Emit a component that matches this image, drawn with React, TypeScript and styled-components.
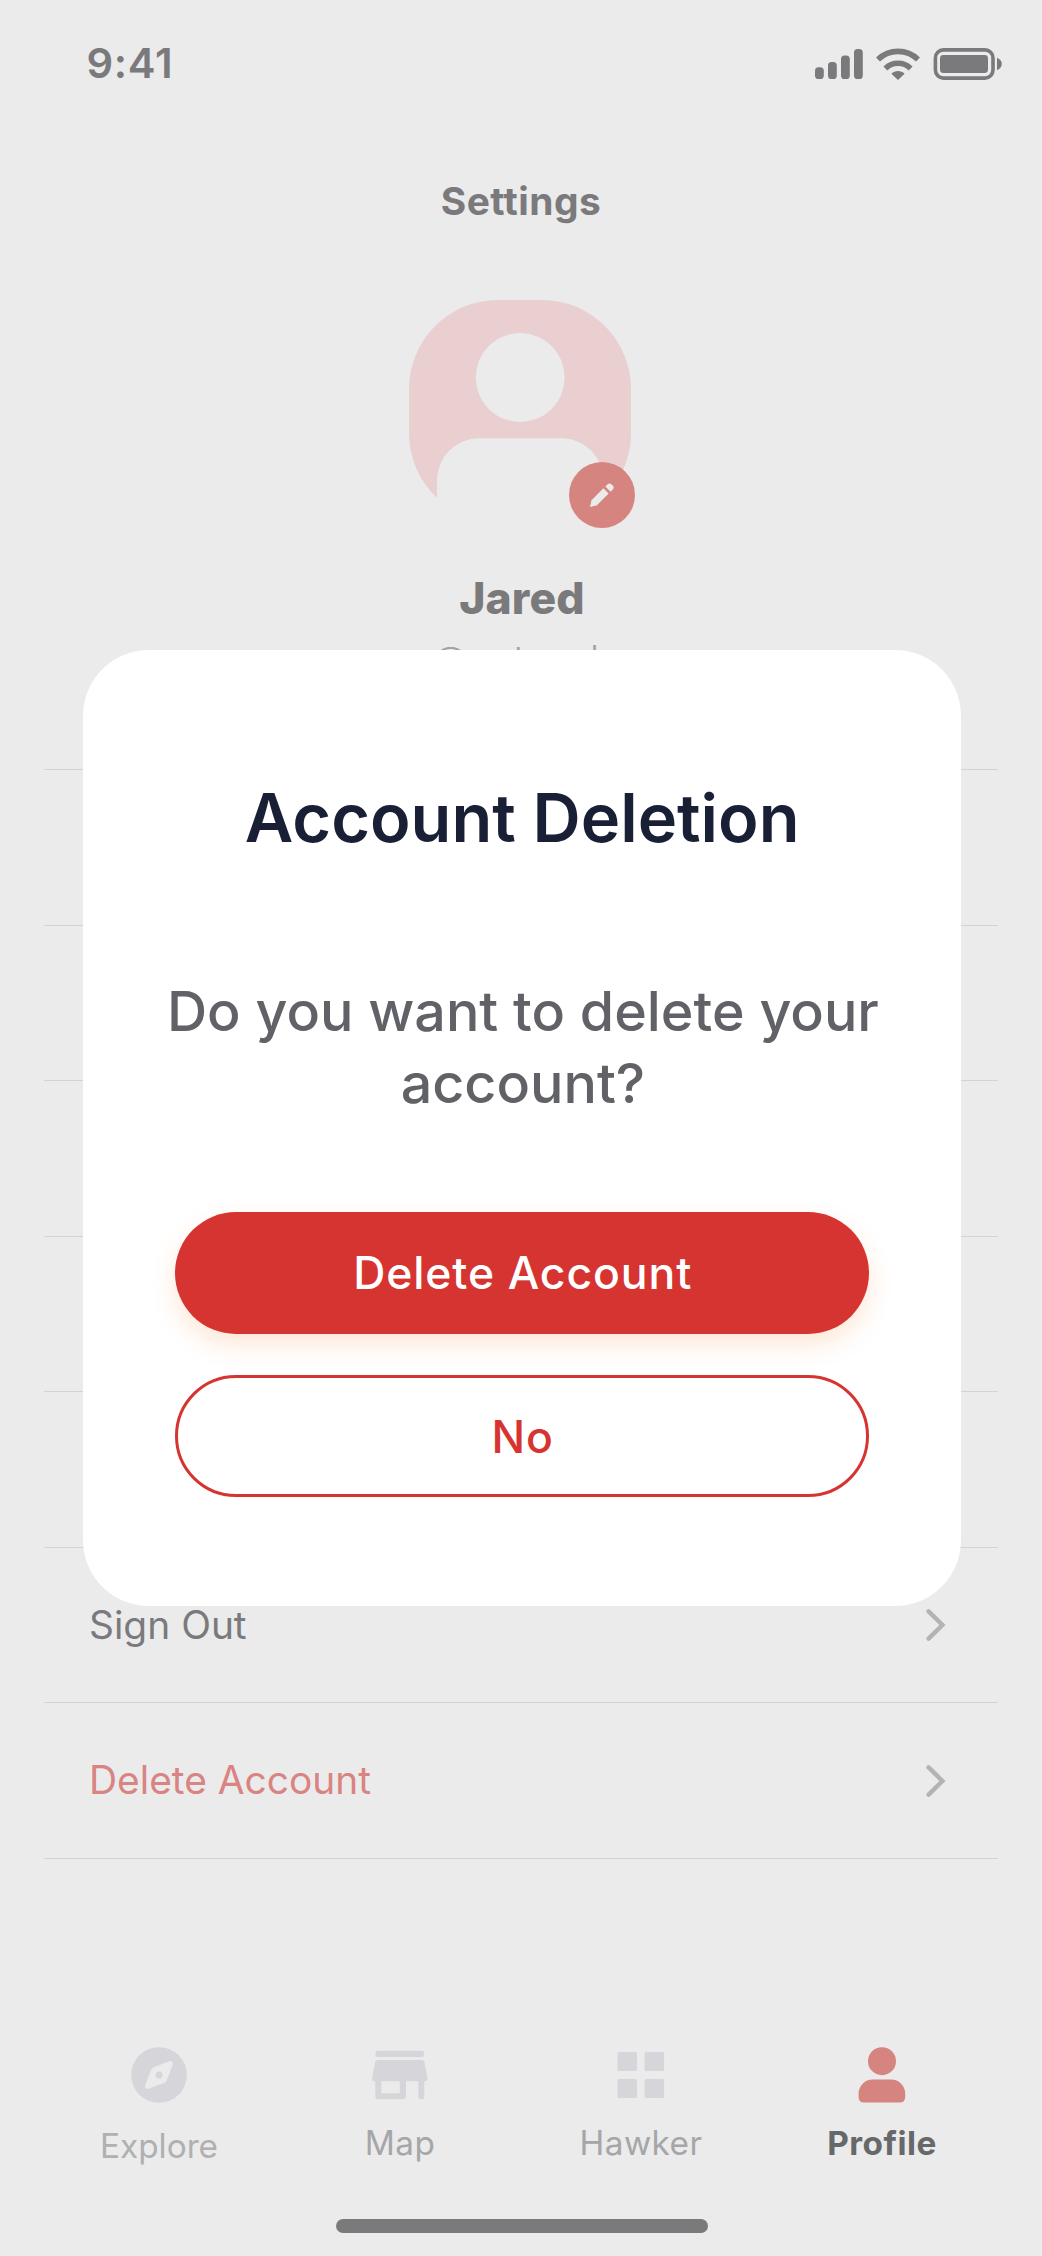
import React from "react";
import styled, { createGlobalStyle } from "styled-components";

const GlobalStyle = createGlobalStyle`
  html, body { margin: 0; padding: 0; background: #ebebeb; }
  * { box-sizing: border-box; }
  body { font-family: Inter, "Liberation Sans", sans-serif; }
`;

const Screen = styled.main`
  position: relative;
  width: 1042px;
  height: 2256px;
  overflow: hidden;
  background: #ebebeb;
  color: #7a7a7c;
  display: flex;
  flex-direction: column;
`;

const StatusBar = styled.header`
  height: 126px;
  flex: none;
  display: flex;
  align-items: center;
  justify-content: space-between;
  padding: 0 40px 0 86.4px;
`;

const Time = styled.span`
  font-size: 41.7px;
  line-height: 50px;
  font-weight: 600;
  letter-spacing: 0.75px;
`;

const StatusIcons = styled.div`
  display: flex;
  align-items: center;
  gap: 13px;
  padding-top: 2px;
`;

const PageTitle = styled.h1`
  margin: 0;
  height: 150px;
  flex: none;
  font-size: 38.9px;
  line-height: 150px;
  font-weight: 700;
  letter-spacing: 0.45px;
  text-align: center;
`;

const ProfileBlock = styled.section`
  height: 493px;
  flex: none;
  padding-top: 24px;
  display: flex;
  flex-direction: column;
  align-items: center;
`;

const Avatar = styled.div`
  position: relative;
  width: 222px;
  height: 222px;
  margin-right: 2px;
`;

const EditBadge = styled.button`
  position: absolute;
  right: -4.4px;
  bottom: -6px;
  width: 66.4px;
  height: 66.4px;
  padding: 0;
  border: 0;
  border-radius: 50%;
  background: #d68480;
  display: flex;
  align-items: center;
  justify-content: center;
`;

const Name = styled.h2`
  margin: 49px 0 0 2px;
  font-size: 44.5px;
  line-height: 54px;
  font-weight: 800;
  letter-spacing: 0.15px;
`;

const Handle = styled.p`
  margin: 8px 0 0;
  font-size: 38.9px;
  line-height: 54px;
  font-weight: 300;
  color: #a2a2a6;
`;

const List = styled.ul`
  list-style: none;
  margin: 0 44px;
  padding: 0;
  border-top: 1px solid #d3d3d5;
`;

const Row = styled.li<{ $danger?: boolean }>`
  height: 155.56px;
  border-bottom: 1px solid #d3d3d5;
  padding: 0 52px 0 45px;
  display: flex;
  align-items: center;
  justify-content: space-between;
  font-size: 38.9px;
  font-weight: 400;
  color: ${(p) => (p.$danger ? "#d98482" : "#7a7a7c")};
`;

const RowLabel = styled.span`
  padding-bottom: 2px;
`;

const TabBar = styled.nav`
  margin-top: 188px;
  padding: 0 38.5px;
  display: grid;
  grid-template-columns: repeat(4, 241px);
`;

const Tab = styled.a`
  display: flex;
  flex-direction: column;
  align-items: center;
`;

const TabLabel = styled.span<{ $active?: boolean; $soft?: boolean }>`
  margin-top: ${(p) => (p.$soft ? 23 : 20.5)}px;
  font-size: 33.35px;
  line-height: 40px;
  font-weight: ${(p) => (p.$active ? 700 : 400)};
  letter-spacing: ${(p) => (p.$soft ? 0 : 0.45)}px;
  color: ${(p) => (p.$active ? "#67686a" : p.$soft ? "#b0b0b2" : "#a6a6a9")};
`;

const HomeIndicator = styled.div`
  width: 372px;
  height: 14px;
  border-radius: 7px;
  background: #7a7a7c;
  margin: auto 0 23px 336px;
`;

const Overlay = styled.div`
  position: absolute;
  inset: 0;
  padding: 650px 81px 0 83px;
`;

const Dialog = styled.section`
  height: 955.5px;
  padding: 127.5px 91.7px 0 92px;
  border-radius: 66px;
  background: #fff;
  display: flex;
  flex-direction: column;
  align-items: center;
`;

const DialogTitle = styled.h2`
  margin: 0;
  font-size: 66.7px;
  line-height: 80px;
  font-weight: 600;
  white-space: nowrap;
  color: #191f35;
`;

const DialogText = styled.p`
  margin: 117px -30px 0 -28.5px;
  font-size: 55.6px;
  line-height: 72.2px;
  font-weight: 500;
  text-align: center;
  white-space: nowrap;
  color: #616267;
`;

const Actions = styled.div`
  margin-top: 92.8px;
  width: 100%;
  display: flex;
  flex-direction: column;
  gap: 41.2px;
`;

const Button = styled.button<{ $primary?: boolean }>`
  height: 122.3px;
  padding: 1px 0 0 1px;
  border-radius: 61.2px;
  border: ${(p) => (p.$primary ? "0" : "3px solid #d63431")};
  background: ${(p) => (p.$primary ? "#d63431" : "#fff")};
  color: ${(p) => (p.$primary ? "#fff" : "#d63431")};
  box-shadow: ${(p) => (p.$primary ? "0 11px 25px rgba(250, 125, 40, 0.19)" : "none")};
  font-family: inherit;
  font-size: 44.5px;
  font-weight: 500;
  letter-spacing: 0.9px;
`;

const Signal = () => (
  <svg width="48" height="30" viewBox="0 0 48 30" fill="#7a7a7c">
    <rect x="0" y="18.3" width="8.8" height="11.7" rx="3.6" />
    <rect x="13" y="13" width="8.8" height="17" rx="3.6" />
    <rect x="26" y="6.5" width="8.8" height="23.5" rx="3.6" />
    <rect x="39" y="0" width="8.8" height="30" rx="3.6" />
  </svg>
);

const Wifi = () => (
  <svg width="44" height="32" viewBox="0 0 44 32" fill="none" stroke="#7a7a7c" strokeWidth="5.6">
    <path d="M2 11.5a28.6 28.6 0 0 1 40 0" />
    <path d="M9.4 20.4a18 18 0 0 1 25.2 0" />
    <path d="M22 32l-6.6-6.3c3.6-3.6 9.6-3.6 13.2 0z" fill="#7a7a7c" stroke="none" />
  </svg>
);

const Battery = () => (
  <svg width="69" height="32" viewBox="0 0 69 32" fill="#7a7a7c">
    <rect x="2.4" y="1.9" width="57.6" height="28.2" rx="8" fill="none" stroke="#7a7a7c" strokeWidth="3.6" />
    <rect x="7" y="7" width="48" height="18" rx="3.4" />
    <path d="M64 9.8c6.4 2.4 6.4 10 0 12.4z" />
  </svg>
);

const Portrait = () => (
  <svg width="222" height="222" viewBox="0 0 222 222">
    <path
      fill="#e9cfd0"
      fillRule="evenodd"
      d="M88.9 0H133.1A88.9 88.9 0 0 1 222 88.9V133.1A88.9 88.9 0 0 1 194.3 197.9V180A41.7 41.7 0 0 0 152.6 138.3H69.8A41.7 41.7 0 0 0 28.1 180V197.9A88.9 88.9 0 0 1 0 133.1V88.9A88.9 88.9 0 0 1 88.9 0ZM111.2 33.1A44.4 44.4 0 1 0 111.2 121.9A44.4 44.4 0 1 0 111.2 33.1Z"
    />
  </svg>
);

const Pencil = () => (
  <svg width="24" height="24" viewBox="0 0 24 24" fill="#ebebeb">
    <path d="M0 24L1.6 17.2L13.4 5.2L18.6 10.6L7 22.2Z" />
    <path d="M15.3 3.5L17.4 1.4C18.6.2 20.4.2 21.6 1.4L22.8 2.6C24 3.8 24 5.4 22.8 6.6L20.6 8.7Z" />
  </svg>
);

const Chevron = () => (
  <svg width="20" height="32" viewBox="0 0 20 32" fill="none" stroke="#b3b3b5" strokeWidth="4.4" strokeLinecap="round">
    <path d="M2.6 2.4L16.4 16L2.6 29.6" />
  </svg>
);

const CompassIcon = () => (
  <svg width="56" height="56" viewBox="0 0 56 56">
    <circle cx="28" cy="28" r="27.8" fill="#d6d6da" />
    <path
      d="M38.2 14.2L22.6 20.3Q21 21 20.3 22.6L14.2 38.5C13.4 40.9 15.2 42.5 17.4 41.7L33.4 35.7Q35 35 35.7 33.4L41.7 17.5C42.5 15.1 40.7 13.3 38.2 14.2Z"
      fill="#ebebeb"
    />
    <circle cx="28" cy="28" r="3.5" fill="#d6d6da" />
  </svg>
);

const StoreIcon = () => (
  <svg width="56" height="56" viewBox="0 0 56 56" fill="#d6d6da">
    <rect x="3.3" y="3.7" width="49" height="6.2" rx="3" />
    <path d="M5.6 13H50Q52 13 52.4 15L55.5 30.5Q56 34 53 34.2H52.3V49.4A2.9 2.9 0 0 1 46.4 49.4V34.2H34V49Q34 52.2 31 52.2H6.3Q3.3 52.2 3.3 49V34.2H2.6Q-.4 34 .1 30.5L3.2 15Q3.6 13 5.6 13ZM9.4 34.2V46.2H27.8V34.2Z" />
  </svg>
);

const GridIcon = () => (
  <svg width="56" height="56" viewBox="0 0 56 56" fill="#d6d6da">
    <rect x="4.5" y="5" width="19.5" height="19" rx="1.6" />
    <rect x="31.6" y="5" width="19.5" height="19" rx="1.6" />
    <rect x="4.5" y="32" width="19.5" height="19" rx="1.6" />
    <rect x="31.6" y="32" width="19.5" height="19" rx="1.6" />
  </svg>
);

const PersonIcon = () => (
  <svg width="56" height="56" viewBox="0 0 56 56" fill="#d68480">
    <circle cx="28" cy="14.2" r="14" />
    <path d="M18.6 32.6H37.2A14 14 0 0 1 51.2 46.6V50Q51.2 55.6 45.6 55.6H10.2Q4.6 55.6 4.6 50V46.6A14 14 0 0 1 18.6 32.6Z" />
  </svg>
);

const coveredRows = [0, 1, 2, 3, 4];

export default function App() {
  return (
    <Screen>
      <GlobalStyle />
      <StatusBar>
        <Time>9:41</Time>
        <StatusIcons>
          <Signal />
          <Wifi />
          <Battery />
        </StatusIcons>
      </StatusBar>
      <PageTitle>Settings</PageTitle>
      <ProfileBlock>
        <Avatar>
          <Portrait />
          <EditBadge aria-label="Edit">
            <Pencil />
          </EditBadge>
        </Avatar>
        <Name>Jared</Name>
        <Handle>@eatseek</Handle>
      </ProfileBlock>
      <List>
        {coveredRows.map((n) => (
          <Row key={n} />
        ))}
        <Row>
          <RowLabel>Sign Out</RowLabel>
          <Chevron />
        </Row>
        <Row $danger>
          <RowLabel>Delete Account</RowLabel>
          <Chevron />
        </Row>
      </List>
      <TabBar>
        <Tab>
          <CompassIcon />
          <TabLabel $soft>Explore</TabLabel>
        </Tab>
        <Tab>
          <StoreIcon />
          <TabLabel>Map</TabLabel>
        </Tab>
        <Tab>
          <GridIcon />
          <TabLabel>Hawker</TabLabel>
        </Tab>
        <Tab>
          <PersonIcon />
          <TabLabel $active>Profile</TabLabel>
        </Tab>
      </TabBar>
      <HomeIndicator />
      <Overlay>
        <Dialog role="dialog">
          <DialogTitle>Account Deletion</DialogTitle>
          <DialogText>
            Do you want to delete your
            <br />
            account?
          </DialogText>
          <Actions>
            <Button $primary>Delete Account</Button>
            <Button>No</Button>
          </Actions>
        </Dialog>
      </Overlay>
    </Screen>
  );
}
